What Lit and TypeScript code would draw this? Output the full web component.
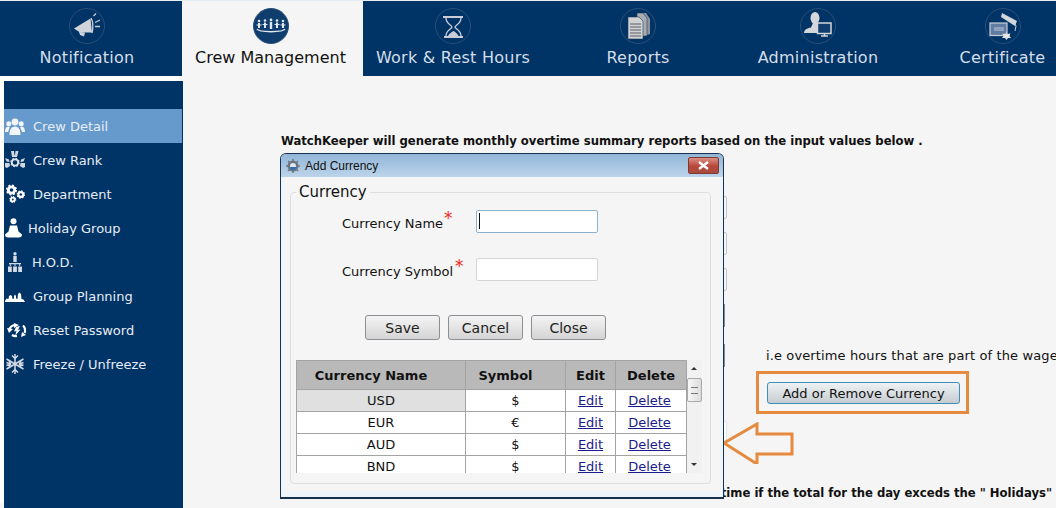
import { LitElement, html, css, svg } from 'lit';
import { customElement } from 'lit/decorators.js';

// toothed ring, used for the Department and Crew Rank icons
const gear = (cx: number, cy: number, r: number, w: number, fill = '#fff') => {
  const dash = (2 * Math.PI * (r + w / 2)) / 16;
  return svg`<circle cx=${cx} cy=${cy} r=${r} fill="none" stroke=${fill} stroke-width=${w}></circle>
    <circle cx=${cx} cy=${cy} r=${r + w / 2} fill="none" stroke=${fill} stroke-width=${w * 0.7} stroke-dasharray=${dash}></circle>`;
};

const navIcons: Record<string, unknown> = {
  notification: svg`<path d="M5 20.500L21.500 10.500l1.500 14L11 24.500z" fill="#d0d4da"/><path d="M10 24l6 .5-1 4-4-1.500z" fill="#d0d4da"/><path d="M22 10c2 3 2.500 10 1 15" fill="none" stroke="#d0d4da" stroke-width="1.300"/><path d="M24.500 8l2.500-2.500M26 14.500l5-2.500M26 18.500h5" stroke="#c4cad2" stroke-width="1.300"/>`,
  crew: svg`<g fill="#dfe7ef"><circle cx="6" cy="13" r="1.300"/><circle cx="12" cy="12.500" r="1.300"/><circle cx="18" cy="12" r="1.400"/><circle cx="24" cy="12.500" r="1.300"/><circle cx="30" cy="13" r="1.300"/><path d="M5 15h2v5H5zM11 14.500h2V20h-2zM16.800 14h2.400v7h-2.400zM23 14.500h2V20h-2zM29 15h2v5h-2zM3.500 16.500h5v1h-5zM9.500 16h5v1h-5zM21.500 16h5v1h-5zM27.500 16.500h5v1h-5z"/></g><path d="M4 21c2 3.500 26 3.500 28 0" fill="none" stroke="#dfe7ef" stroke-width="1.500"/>`,
  hours: svg`<path d="M8 9h20M9 29h19" stroke="#c9ced6" stroke-width="2"/><path d="M11 10c0 6 6 7 6 9s-6 3-6 9M26 10c0 6-6 7-6 9s6 3 6 9" fill="none" stroke="#c9ced6" stroke-width="1.300"/><path d="M13 28c1-2.500 4-4 5.500-5 1.500 1 4 2.500 5 5z" fill="#c9ced6"/>`,
  reports: svg`<path d="M22 5h4l4 6v15l-3 1z" fill="#8f959e"/><path d="M17 5h6l4 5v18H17z" fill="#a9adb3" stroke="#22395a" stroke-width=".6"/><path d="M8 9h11l4 4v18H8z" fill="#d0d2d4" stroke="#22395a" stroke-width=".6"/><path d="M10 16h11M10 19h11M10 22h11M10 25h11M10 28h11" stroke="#5a5f66" stroke-width="1.100"/>`,
  admin: svg`<ellipse cx="15" cy="10" rx="4.500" ry="6" fill="#d4d6d9"/><path d="M13 15h4l1 5v5H4c0-3 3-5 7-5.500z" fill="#d4d6d9"/><rect x="17.500" y="15" width="13.500" height="10.500" fill="#0f3d6e" stroke="#d4d6d9" stroke-width="1.500"/><path d="M21 28h7M24.500 26v2" stroke="#d4d6d9" stroke-width="1.500"/>`,
  certificate: svg`<rect x="5" y="15" width="17" height="12.500" fill="#5f7da3" stroke="#c9ced6" stroke-width="1.200"/><path d="M9 19h10v4H9z" fill="#8ea2bd"/><path d="M17 5l15 8-2 5-14-9z" fill="#d4d6d9"/><path d="M30 16l1 2-1 5" stroke="#c9ced6" fill="none"/><path d="M21 24l1.500 2 3-.5-1 2.500 1.500 2-3 0-1.500 2-1.500-2-3 0 1.500-2-1-2.500 3 .5z" fill="#e2e4e6"/>`,
};

const sideIcons: Record<string, unknown> = {
  detail: svg`<g fill="#f2f5f8"><circle cx="10" cy="4" r="3.400"/><circle cx="3.800" cy="5.800" r="2.500"/><circle cx="16.200" cy="5.800" r="2.500"/><path d="M4.500 17c0-5 1.500-8.500 5.500-8.500s5.500 3.500 5.500 8.500zM0 14c0-3.500 1-5.500 3.800-5.500l1 .8L3 14zM20 14c0-3.500-1-5.500-3.800-5.500l-1 .8L17 14z"/></g>`,
  rank: svg`<path d="M6 0h3l.5 4h.5l.5-4h3l-1.500 6h-5z" fill="#cfd6df"/>${gear(10, 11.500, 3.200, 1.800, '#e2e7ed')}<g fill="#cfd6df"><path d="M0 7l4 1.500.5 2.500-3-.5zM20 7l-4 1.500-.5 2.500 3-.5zM0 12l4.500 0 .5 3-3 2-2-1zM20 12l-4.500 0-.5 3 3 2 2-1z"/></g>`,
  department: svg`${gear(6.500, 6, 3.200, 2.800)}${gear(15.800, 10.500, 2.400, 2.200)}${gear(7.800, 15.500, 1.900, 1.900)}`,
  holiday: svg`<g fill="#fff"><circle cx="8.500" cy="3.300" r="3"/><path d="M5 7.500h7l1.500 6 3.500 3c0 2-1 3-3 3H3c-2 0-3-1-3-3l3.500-3z"/></g>`,
  hod: svg`<g fill="#d5dbe4"><circle cx="7" cy="1.800" r="1.700"/><path d="M5.300 4h3.400v6H5.300z"/><path d="M1 11h12v1.200H1zM1.800 11h1v3h-1zM6.500 11h1v3h-1zM11.200 11h1v3h-1z"/><path d="M0 14.500h3.800V20H0zM5.100 14.500h3.800V20H5.100zM10.200 14.500H14V20h-3.800z"/></g>`,
  planning: svg`<path d="M0 10l1.500-2.500 2 .5.500-3 1.500-1 1.500 1 .5 3 1.500-.5V5l1-1.500L11 5v2.500l1.500.5.500-5 1.500-1.500L16 3l.5 5 2 .5L20 11H0z" fill="#fff"/>`,
  reset: svg`<path d="M2 7c1-3 4-5 7-5M16 2.500c2 2 2.500 5 1.500 7.500M5 12c1.500 1 3 1.500 5 1" fill="none" stroke="#fff" stroke-width="2.200"/><path d="M7 0l5 2-5 3zM0 5l6 1-4 4zM14 14l1-5 4 3zM9 4l4-1-2 4 2.500-.5L8 13l1.500-5L7 8.500z" fill="#fff"/>`,
  freeze: svg`<g stroke="#d5dbe4" stroke-width="1.500" fill="none"><path d="M9 0v20M.5 5l17 10M.5 15l17-10"/><path d="M6 1.500l3 3 3-3M6 18.500l3-3 3 3M.5 8.500l4 1.500L3 14M17.500 8.500l-4 1.500 1.500 4M.5 11.500l4-1.500L3 6M17.500 11.500l-4-1.500 1.500-4"/></g>`,
};

const tabs = [
  { key: 'notification', label: 'Notification' },
  { key: 'crew', label: 'Crew Management' },
  { key: 'hours', label: 'Work & Rest Hours' },
  { key: 'reports', label: 'Reports' },
  { key: 'admin', label: 'Administration' },
  { key: 'certificate', label: 'Certificate' },
];

// left = icon x, textX = label x, both in page pixels
const sideItems = [
  { key: 'detail', label: 'Crew Detail', left: 5, w: 20, h: 17, textX: 33 },
  { key: 'rank', label: 'Crew Rank', left: 5, w: 20, h: 18, textX: 33 },
  { key: 'department', label: 'Department', left: 5, w: 20, h: 20, textX: 33 },
  { key: 'holiday', label: 'Holiday Group', left: 5, w: 17, h: 20, textX: 28 },
  { key: 'hod', label: 'H.O.D.', left: 8, w: 14, h: 20, textX: 32 },
  { key: 'planning', label: 'Group Planning', left: 5, w: 20, h: 11, textX: 33 },
  { key: 'reset', label: 'Reset Password', left: 7, w: 19, h: 15, textX: 33 },
  { key: 'freeze', label: 'Freeze / Unfreeze', left: 6, w: 18, h: 20, textX: 33 },
];

const currencies = [
  ['USD', '$'],
  ['EUR', '€'],
  ['AUD', '$'],
  ['BND', '$'],
];

@customElement('app-root')
export class AppRoot extends LitElement {
  static styles = css`
    :host {
      display: block;
      position: relative;
      width: 1056px;
      height: 508px;
      overflow: hidden;
      background: #f5f5f5;
      font-family: 'DejaVu Sans', Verdana, sans-serif;
      color: #111;
    }
    .nav {
      display: flex;
      height: 75px;
      border-top: 1px solid #e6edf3;
      background: #003366;
    }
    .tab {
      box-sizing: border-box;
      display: flex;
      flex-direction: column;
      align-items: center;
      padding-top: 7px;
      color: #d5dfea;
      font-size: 16px;
      letter-spacing: 0.25px;
    }
    .tab svg {
      width: 36px;
      height: 36px;
      margin-bottom: 4px;
    }
    .tab span {
      white-space: nowrap;
      line-height: 20px;
    }
    .tab.notification { width: 182px; padding-right: 8px; }
    .tab.crew { width: 181px; padding-right: 4px; background: #f5f5f5; color: #111; letter-spacing: 0; }
    .tab.hours { width: 180px; }
    .tab.reports { width: 190px; }
    .tab.admin { width: 170px; }
    .tab.certificate { width: 153px; padding-left: 46px; }
    .lower {
      display: flex;
      height: 432px;
    }
    .sidebar {
      box-sizing: border-box;
      width: 179px;
      height: 427px;
      margin-top: 5px;
      margin-left: 4px;
      padding-top: 28px;
      flex: none;
      background: #003366;
      box-shadow: -4px -5px 0 #fff;
    }
    .side-item {
      display: flex;
      align-items: center;
      height: 34px;
      margin-right: 1px;
      color: #e6edf4;
      font-size: 13px;
      white-space: nowrap;
    }
    .side-item.active {
      background: #6699cc;
    }
    .side-item svg {
      flex: none;
    }
    .content {
      flex: 1;
      min-width: 0;
      padding-left: 98px;
    }
    .intro {
      margin: 57px 0 0;
      font-size: 11.650px;
      line-height: 16px;
      font-weight: bold;
      white-space: nowrap;
    }
    .stub {
      box-sizing: border-box;
      flex: none;
      width: 166px;
      height: 23px;
      margin-left: 280px;
      border: 1px solid #c4c8cc;
      border-radius: 2px;
    }
    .stub.top { margin-top: 47px; }
    .stub.next { margin-top: 13px; }
    .stub.dark {
      width: 164px;
      border: none;
      border-right: 2px solid #7d8ea0;
      border-radius: 0;
    }
    .stub.pale {
      height: 20px;
      margin-top: 7px;
      border-color: #e2e5e8;
      background: #fff;
    }
    .note-row {
      display: flex;
      align-items: center;
      margin-top: 17px;
    }
    .wage-note {
      margin: 0 0 0 41px;
      font-size: 13px;
      line-height: 16px;
      letter-spacing: 0.12px;
      white-space: nowrap;
    }
    .highlight {
      box-sizing: border-box;
      width: 213px;
      height: 43px;
      margin: 4px 0 0 475px;
      padding: 8px;
      border: 3px solid #e58a3f;
    }
    .add-btn {
      display: block;
      width: 193px;
      height: 22px;
      padding: 0;
      border: 1px solid #3d8fb8;
      border-radius: 3px;
      background: linear-gradient(#eef2f4, #c6ccd1);
      color: #111;
      font: 13px 'DejaVu Sans', Verdana, sans-serif;
    }
    .holiday-note {
      position: absolute;
      right: 4px;
      top: 485px;
      margin: 0;
      font-size: 11.650px;
      line-height: 16px;
      font-weight: bold;
      white-space: nowrap;
    }
    .arrow {
      position: absolute;
      left: 722px;
      top: 422px;
      width: 72px;
      height: 42px;
    }
    .dialog {
      position: absolute;
      box-sizing: border-box;
      left: 280px;
      top: 153px;
      width: 444px;
      height: 346px;
      display: flex;
      flex-direction: column;
      border: 1px solid #17324f;
      border-bottom-width: 2px;
      border-radius: 6px 6px 0 0;
      background: #eef6fb;
    }
    .title {
      display: flex;
      align-items: center;
      gap: 5px;
      flex: none;
      height: 23px;
      padding: 0 4px 0 5px;
      border-radius: 5px 5px 0 0;
      background: linear-gradient(#92b6d8, #bcd4ea);
      font: 12px 'Liberation Sans', Arial, sans-serif;
    }
    .title-name { flex: 1; }
    .close-x {
      box-sizing: border-box;
      width: 31px;
      height: 17px;
      display: flex;
      align-items: center;
      justify-content: center;
      border: 1px solid #7c3a34;
      border-radius: 2px;
      background: linear-gradient(#dc8f84, #b8473a 55%, #a94b3f);
    }
    .dialog-body {
      flex: 1;
      margin: 0 3px 6px;
      padding: 7px 9px 0 6px;
      background: #f5f5f5;
      min-height: 0;
    }
    fieldset {
      box-sizing: border-box;
      height: 300px;
      margin: 0;
      padding: 0;
      border: 1px solid #dcdfe2;
      border-radius: 4px;
    }
    legend {
      margin-left: 5px;
      padding: 0 3px;
      font-size: 15px;
      line-height: 17px;
    }
    .form-row {
      display: flex;
      align-items: center;
      height: 24px;
      padding-left: 51px;
      font-size: 13px;
    }
    .form-row.first { margin-top: 9px; }
    .form-row.second { margin-top: 24px; }
    .form-label {
      position: relative;
      width: 134px;
      padding-top: 2px;
      white-space: nowrap;
    }
    .req {
      position: absolute;
      top: -6px;
      color: #f02a20;
      font-size: 17px;
    }
    .req.name { left: 102px; }
    .req.symbol { left: 113px; }
    .form-row input {
      box-sizing: border-box;
      width: 122px;
      height: 23px;
      margin-top: -2px;
      padding: 0;
      border: 1px solid #d3d6d9;
      border-radius: 2px;
      background: #fff;
    }
    .form-row input.focus {
      border-color: #8fb2cc;
    }
    .caret {
      position: absolute;
      left: 479px;
      top: 213px;
      width: 1px;
      height: 16px;
      background: #111;
    }
    .buttons {
      display: flex;
      gap: 8px;
      margin: 33px 0 0 74px;
    }
    .buttons button {
      width: 75px;
      height: 25px;
      padding: 0;
      border: 1px solid #8b8f93;
      border-radius: 3px;
      background: linear-gradient(#f4f4f4, #d4d4d4);
      color: #222;
      font: 14px 'DejaVu Sans', Verdana, sans-serif;
    }
    .grid-wrap {
      display: flex;
      height: 113px;
      margin: 20px 0 0 5px;
      overflow: hidden;
    }
    table {
      width: 390px;
      flex: none;
      align-self: flex-start;
      border-collapse: collapse;
      table-layout: fixed;
      font-size: 13px;
    }
    th, td {
      box-sizing: border-box;
      padding: 0;
      border: 1px solid #a3a3a3;
      text-align: center;
    }
    th {
      height: 29px;
      background: #b9b9b9;
      font-weight: bold;
    }
    th.name-head { padding-right: 20px; }
    th.symbol-head { padding-right: 20px; }
    td {
      height: 22px;
      background: #fff;
    }
    td:last-child { padding-right: 3px; }
    tr:first-child td:first-child {
      background: #e0e0e0;
    }
    td a {
      color: #1a1a8c;
      text-decoration: underline;
    }
    .scroll {
      position: relative;
      width: 15px;
      background: #f1f1f1;
    }
    .thumb {
      position: absolute;
      left: 0;
      top: 18px;
      box-sizing: border-box;
      width: 15px;
      height: 24px;
      border: 1px solid #a9a9a9;
      border-radius: 2px;
      background: linear-gradient(90deg, #f6f6f6, #dcdcdc);
    }
    .thumb::after {
      content: '';
      position: absolute;
      left: 3px;
      top: 8px;
      width: 7px;
      height: 5px;
      border-top: 1px solid #777;
      border-bottom: 1px solid #777;
    }
    .scroll-up, .scroll-down {
      position: absolute;
      left: 4px;
      width: 0;
      height: 0;
      border-left: 3px solid transparent;
      border-right: 3px solid transparent;
    }
    .scroll-up { top: 7px; border-bottom: 3px solid #333; }
    .scroll-down { bottom: 7px; border-top: 3px solid #333; }
  `;

  render() {
    return html`
      <div class="nav">
        ${tabs.map(
          (t) => html`
            <div class="tab ${t.key}">
              <svg viewBox="0 0 36 36">
                <circle cx="18" cy="18" r="17.500" fill=${t.key === 'crew' ? '#0f3d6e' : '#003366'} stroke="#2b5078" stroke-width="1"></circle>
                ${navIcons[t.key]}
              </svg>
              <span>${t.label}</span>
            </div>
          `,
        )}
      </div>

      <div class="lower">
        <div class="sidebar">
          ${sideItems.map(
            (s, i) => html`
              <div class="side-item ${i === 0 ? 'active' : ''}">
                <svg
                  width=${s.w}
                  height=${s.h}
                  viewBox="0 0 ${s.w} ${s.h}"
                  style="margin-left:${s.left - 4}px;margin-right:${s.textX - s.left - s.w}px"
                >${sideIcons[s.key]}</svg>
                <span>${s.label}</span>
              </div>
            `,
          )}
        </div>
        <div class="content">
          <p class="intro">WatchKeeper will generate monthly overtime summary reports based on the input values below .</p>
          <div class="stub top"></div>
          <div class="stub next"></div>
          <div class="stub next"></div>
          <div class="stub dark next"></div>
          <div class="note-row">
            <div class="stub dark"></div>
            <p class="wage-note">i.e overtime hours that are part of the wage</p>
          </div>
          <div class="highlight"><button class="add-btn">Add or Remove Currency</button></div>
          <div class="stub pale"></div>
        </div>
      </div>

      <p class="holiday-note">Overtime if the total for the day exceds the " Holidays"</p>

      <svg class="arrow" viewBox="0 0 72 42">
        <path d="M2 21L35 2v10h35v20H35v10z" fill="none" stroke="#e58a3f" stroke-width="3"></path>
      </svg>

      <div class="dialog">
        <div class="title">
          <svg width="14" height="14" viewBox="0 0 14 14">
            <circle cx="7" cy="7" r="5.500" fill="#6e7780"></circle>
            <path d="M7 0v14M0 7h14M2 2l10 10M12 2L2 12" stroke="#6e7780" stroke-width="1.500"></path>
            <circle cx="7" cy="7" r="3" fill="#dfe6ec"></circle>
            <path d="M4 8h6a3 3 0 0 1-6 0z" fill="#2f6fb0"></path>
          </svg>
          <span class="title-name">Add Currency</span>
          <span class="close-x">
            <svg width="13" height="9" viewBox="0 0 13 9">
              <path d="M2 1l9 7M11 1L2 8" stroke="#fff" stroke-width="2.400"></path>
            </svg>
          </span>
        </div>
        <div class="dialog-body">
          <fieldset>
            <legend>Currency</legend>
            <div class="form-row first">
              <span class="form-label">Currency Name<span class="req name">*</span></span>
              <input class="focus" />
            </div>
            <div class="form-row second">
              <span class="form-label">Currency Symbol<span class="req symbol">*</span></span>
              <input />
            </div>
            <div class="buttons">
              <button>Save</button>
              <button>Cancel</button>
              <button>Close</button>
            </div>
            <div class="grid-wrap">
              <table>
                <colgroup>
                  <col style="width:169px" /><col style="width:100px" /><col style="width:50px" /><col style="width:71px" />
                </colgroup>
                <thead>
                  <tr><th class="name-head">Currency Name</th><th class="symbol-head">Symbol</th><th>Edit</th><th>Delete</th></tr>
                </thead>
                <tbody>
                  ${currencies.map(
                    (c) => html`<tr><td>${c[0]}</td><td>${c[1]}</td><td><a href="#">Edit</a></td><td><a href="#">Delete</a></td></tr>`,
                  )}
                </tbody>
              </table>
              <div class="scroll">
                <span class="scroll-up"></span>
                <span class="thumb"></span>
                <span class="scroll-down"></span>
              </div>
            </div>
          </fieldset>
        </div>
      </div>
      <span class="caret"></span>
    `;
  }
}
